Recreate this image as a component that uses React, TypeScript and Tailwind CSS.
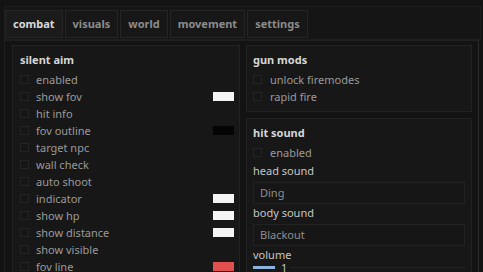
import React from 'react';

const font = { fontFamily: '"Noto Sans", "DejaVu Sans", sans-serif' };

function Check({ label, color, gap = 'mr-[7px]' }: { label: string; color?: string; gap?: string }) {
  return (
    <div className="flex items-center h-[17px]">
      <div className={`w-[9px] h-[9px] border border-[#242424] bg-[#161616] ${gap}`} />
      <span className="text-[11px] text-[#9a9a9a] leading-none flex-1">{label}</span>
      {color && <div className={`w-[21px] h-[9px] ${color}`} />}
    </div>
  );
}

function Label({ children }: { children: React.ReactNode }) {
  return <div className="h-[20px] pb-[3px] flex items-center text-[11px] text-[#c6c6c6] leading-none">{children}</div>;
}

function Select({ value }: { value: string }) {
  return (
    <div className="h-[22px] border border-[#222] bg-[#161616] flex items-center pl-[6px] text-[11px] text-[#8e8e8e]">
      {value}
    </div>
  );
}

export default function App() {
  const tabs = ['combat', 'visuals', 'world', 'movement', 'settings'];
  return (
    <div style={font} className="w-[483px] h-[272px] bg-[#131313] overflow-hidden pt-[6px] pl-[4px] pr-[2px]">
      <div className="flex border border-[#1e1e1e] bg-[#151515] pt-[3px] pb-px gap-[2px]">
        {tabs.map((t, i) => (
          <div key={t} className={`h-[28px] px-[7px] flex items-center border border-[#252525] text-[11px] font-bold ${i === 0 ? 'bg-[#1b1b1b] text-[#dadada]' : 'bg-[#171717] text-[#8c8c8c]'}`}>
            {t}
          </div>
        ))}
      </div>
      <div className="flex gap-[6px] border border-[#202020] border-r-[#2a2a2a] pl-[7px] pt-[4px] w-[475px] h-[240px]">
        <div className="w-[228px] h-[260px] shrink-0 border border-[#222] bg-[#171717] pl-[7px] pr-[5px] pt-[8px]">
          <div className="text-[11px] font-bold text-[#d6d6d6] leading-[12px] mb-[5px]">silent aim</div>
          <Check label="enabled" />
          <Check label="show fov" color="bg-[#f4f4f4]" />
          <Check label="hit info" />
          <Check label="fov outline" color="bg-[#050505]" />
          <Check label="target npc" />
          <Check label="wall check" />
          <Check label="auto shoot" />
          <Check label="indicator" color="bg-[#f4f4f4]" />
          <Check label="show hp" color="bg-[#f4f4f4]" />
          <Check label="show distance" color="bg-[#f4f4f4]" />
          <Check label="show visible" />
          <Check label="fov line" color="bg-[#e24f4f]" />
        </div>
        <div className="flex flex-col gap-[6px] w-[226px] shrink-0">
          <div className="h-[67px] shrink-0 border border-[#222] bg-[#171717] px-[6px] pt-[8px]">
            <div className="text-[11px] font-bold text-[#d6d6d6] leading-[12px] mb-[5px]">gun mods</div>
            <Check label="unlock firemodes" gap="mr-[8px]" />
            <Check label="rapid fire" gap="mr-[8px]" />
          </div>
          <div className="h-[200px] shrink-0 border border-[#222] bg-[#171717] px-[6px] pt-[8px]">
            <div className="text-[11px] font-bold text-[#d6d6d6] leading-[12px] mb-[5px]">hit sound</div>
            <Check label="enabled" gap="mr-[8px]" />
            <div className="mt-[1px]">
              <Label>head sound</Label>
            </div>
            <Select value="Ding" />
            <Label>body sound</Label>
            <Select value="Blackout" />
            <Label>volume</Label>
            <div className="flex items-center h-[3px]">
              <div className="w-[22px] h-[3px] bg-[#8db4de]" />
              <span className="text-[11px] text-[#c4c4c4] leading-none ml-[6px]">1</span>
              <div className="flex-1 h-px bg-[#222] ml-[4px]" />
            </div>
          </div>
        </div>
      </div>
    </div>
  );
}
